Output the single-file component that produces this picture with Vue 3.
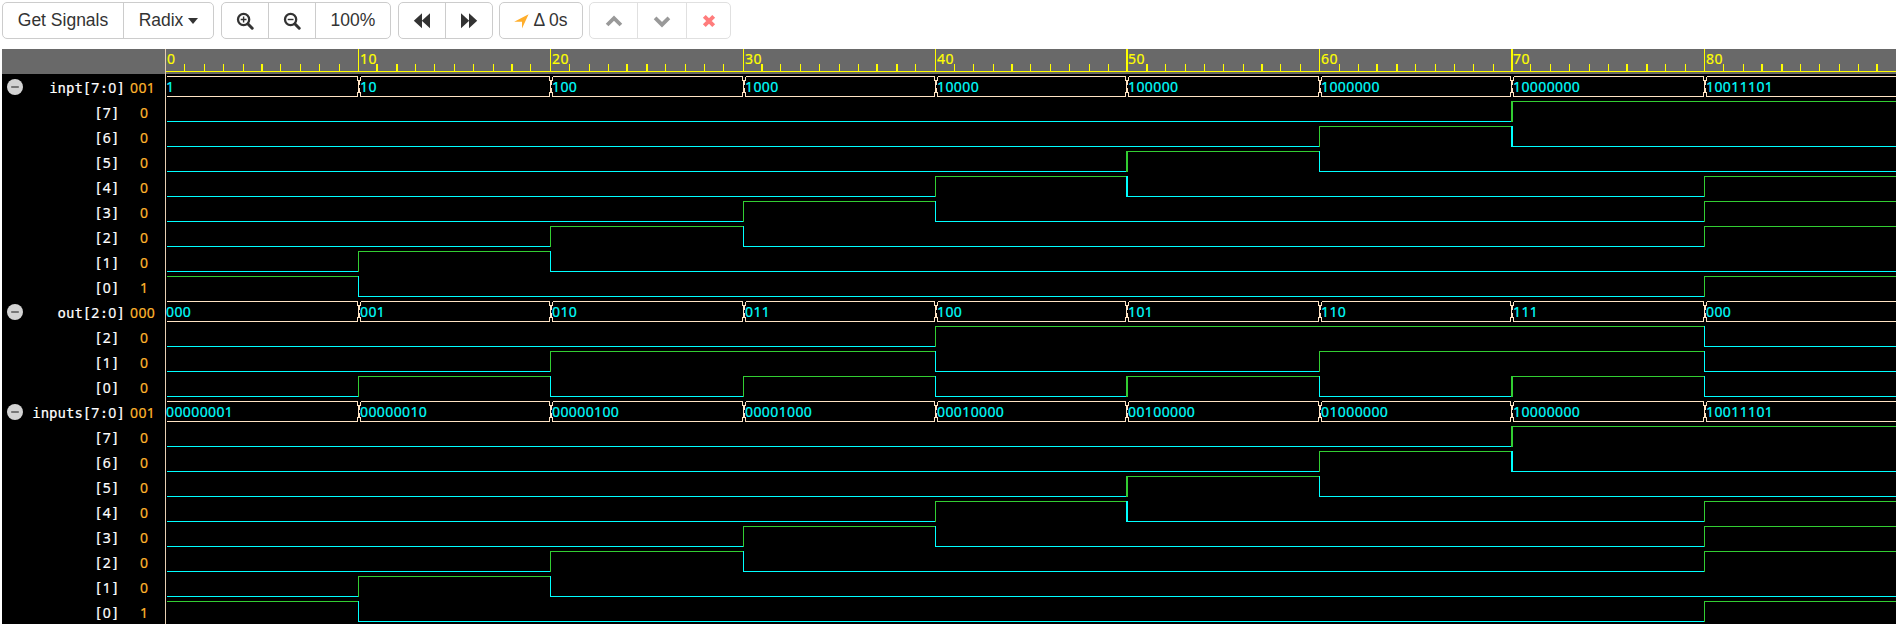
<script setup>
const times = [0, 10, 20, 30, 40, 50, 60, 70, 80]
const END = 1896

// Grid position snapped to device pixels; every fourth column is two pixels wide
function tick(n) {
  const unit = Math.floor(129.58 + 15.386 * n)
  const q = Math.floor(unit / 4)
  const r = unit % 4
  return { x: q * 5 + 4 + [0, 1, 2, 4][r], w: r === 2 ? 2 : 1 }
}

const ticks = []
for (let n = 1; n < 90; n++) {
  const t = tick(n)
  if (t.x < END) ticks.push({ n, ...t, major: n % 10 === 0 })
}

const oneHot = ['00000001', '00000010', '00000100', '00001000', '00010000', '00100000', '01000000', '10000000', '10011101']
const codes = ['000', '001', '010', '011', '100', '101', '110', '111', '000']

function bus(name, range, words, shown, value) {
  const size = words[0].length
  const list = [{ group: true, name, range, value, words: shown }]
  for (let b = size - 1; b >= 0; b--) {
    const bits = words.map((w) => Number(w[size - 1 - b]))
    list.push({ group: false, range: String(b), value: String(bits[0]), bits })
  }
  return list
}

const rows = [
  ...bus('inpt', '7:0', oneHot, oneHot.map((w) => w.replace(/^0+/, '')), '001'),
  ...bus('out', '2:0', codes, codes, '000'),
  ...bus('inputs', '7:0', oneHot, oneHot, '001'),
]

const edge = (i) => (i === 0 ? { x: 167, w: 0 } : tick(times[i]))

const rects = []
const frames = []
const labels = []
rows.forEach((row, k) => {
  const hi = 76 + 25 * k
  const lo = hi + 20
  times.forEach((_, i) => {
    const a = edge(i)
    const last = i === times.length - 1
    const b = last ? { x: END, w: 0 } : edge(i + 1)
    if (row.group) {
      const x1 = i === 0 ? 167 : a.x + 2.5
      const x2 = last ? END : b.x - 0.5
      let d = `M${x1} ${hi + 0.5}H${x2}`
      if (!last) d += `V${hi + 4}L${b.x + 0.5} ${hi + 5}V${hi + 16}L${x2} ${hi + 17}V${lo + 0.5}`
      else d += `M${x2} ${lo + 0.5}`
      d += `H${x1}`
      if (i > 0) d += `V${hi + 17}L${a.x + 1.5} ${hi + 16}V${hi + 13}L${a.x + 0.5} ${hi + 12}V${hi + 9}L${a.x + 1.5} ${hi + 8}V${hi + 5}L${x1} ${hi + 4}V${hi + 0.5}`
      frames.push(d)
      labels.push({ x: i === 0 ? 166 : a.x + 2, y: hi + 16, text: row.words[i] })
    } else {
      const on = row.bits[i]
      const color = on ? '#32cd32' : '#00ffff'
      rects.push({ x: a.x, y: on ? hi : lo, w: b.x + b.w - a.x, h: 1, color })
      if (i > 0 && row.bits[i - 1] !== on) {
        rects.push({ x: a.x, y: hi, w: a.w, h: 21, color })
      }
    }
  })
})
</script>

<template>
  <div class="viewer">
    <div class="toolbar">
      <div class="group">
        <button class="w121">Get Signals</button>
        <button class="w90">Radix<span class="caret"></span></button>
      </div>
      <div class="group">
        <button class="w47">
          <svg width="18" height="18" viewBox="0 0 18 18"><circle cx="7.6" cy="7.5" r="5.6" class="ring" /><path d="M12 12l4.2 4.2" class="handle" /><path d="M7.6 4.6v5.8M4.7 7.5h5.8" class="sign" /></svg>
        </button>
        <button class="w47">
          <svg width="18" height="18" viewBox="0 0 18 18"><circle cx="7.6" cy="7.5" r="5.6" class="ring" /><path d="M12 12l4.2 4.2" class="handle" /><path d="M4.7 7.5h5.8" class="sign" /></svg>
        </button>
        <button class="w75">100%</button>
      </div>
      <div class="group">
        <button class="w47">
          <svg width="18" height="18" viewBox="0 0 18 18"><path d="M9 1.3V16.3L.8 8.8zM17 1.3V16.3L8.8 8.8z" fill="#333" /></svg>
        </button>
        <button class="w47">
          <svg width="18" height="18" viewBox="0 0 18 18"><path d="M9 1.3V16.3L17.2 8.8zM1 1.3V16.3L9.2 8.8z" fill="#333" /></svg>
        </button>
      </div>
      <div class="group">
        <button class="w82">
          <svg class="nav" width="15" height="15" viewBox="0 0 15 15"><path d="M14.6.3L8 14.5V7.8H.2z" fill="#ffae2b" /></svg><span class="delta">Δ 0s</span>
        </button>
      </div>
      <div class="group disabled">
        <button class="w47">
          <svg width="18" height="18" viewBox="0 0 18 18"><path d="M2.1 13L9 6.1 15.9 13" class="chev" /></svg>
        </button>
        <button class="w48">
          <svg width="18" height="18" viewBox="0 0 18 18"><path d="M2.1 5.8L9 12.7 15.9 5.8" class="chev" /></svg>
        </button>
        <button class="w44">
          <svg width="18" height="18" viewBox="0 0 18 18"><path d="M4.3 4.3L13.7 13.7M13.7 4.3L4.3 13.7" class="cross" /></svg>
        </button>
      </div>
    </div>

    <div class="panel">
      <div class="names">
        <div class="head"></div>
        <div v-for="(row, k) in rows" :key="k" class="row" :class="{ bit: !row.group }">
          <span class="toggle"><svg v-if="row.group" width="16" height="16" viewBox="0 0 16 16"><circle cx="8" cy="8" r="8" fill="#d3d3d3" /><path d="M4.2 8h7.6" stroke="#505050" stroke-width="1.4" /></svg></span>
          <span class="name">{{ row.name }}[<template v-for="(c, i) in row.range" :key="i"><template v-if="c === ':'">:</template><span v-else class="num">{{ c }}</span></template>]</span>
          <span class="value num">{{ row.value }}</span>
        </div>
      </div>
      <svg class="waves" width="1731" height="575" viewBox="165 49 1731 575">
        <rect x="165" y="49" width="1731" height="575" fill="#000" />
        <rect x="165" y="49" width="1731" height="25" fill="#696969" />
        <rect x="166" y="71" width="1730" height="1" fill="#ff0" />
        <rect v-for="t in ticks" :key="t.n" :x="t.x" :y="t.major ? 49 : 64" :width="t.w" :height="t.major ? 22 : 7" fill="#ff0" />
        <rect x="165" y="49" width="1" height="575" fill="#e6cfb2" />
        <text v-for="(t, i) in times" :key="'t' + t" class="num yellow" :x="i === 0 ? 167 : edge(i).x + 2" y="64">{{ t }}</text>
        <rect v-for="(r, i) in rects" :key="'r' + i" :x="r.x" :y="r.y" :width="r.w" :height="r.h" :fill="r.color" />
        <path v-for="(d, i) in frames" :key="'f' + i" :d="d" class="frame" />
        <text v-for="(l, i) in labels" :key="'l' + i" class="num cyan" :x="l.x" :y="l.y">{{ l.text }}</text>
      </svg>
    </div>
  </div>
</template>

<style scoped>
.viewer {
  width: 1902px;
  height: 627px;
  background: #fff;
  overflow: hidden;
}
.toolbar {
  display: flex;
  gap: 7px;
  height: 47px;
  padding: 2px 0 0 2px;
  align-items: flex-start;
}
.group {
  display: flex;
  height: 37px;
  box-sizing: border-box;
  border: 1px solid #ccc;
  border-radius: 5px;
}
.group:nth-child(4) {
  margin-left: -1px;
}
.group:nth-child(5) {
  margin-left: -1px;
}
button {
  display: flex;
  align-items: center;
  justify-content: center;
  box-sizing: border-box;
  height: 35px;
  padding: 0;
  border: 0;
  background: none;
  color: #333;
  font: 17.5px/25px "Liberation Sans", Arial, sans-serif;
  white-space: pre;
}
button + button {
  border-left: 1px solid #ccc;
}
.w121 { width: 120px; }
.w90 { width: 90px; }
.w47 { width: 47px; }
.w48 { width: 49px; }
.w44 { width: 44px; }
.w75 { width: 75px; }
.w82 { width: 82px; }
.w47:first-child { width: 46px; }
.disabled { border-color: #e0e0e0; }
.disabled .w47 { width: 47px; }
.disabled button { border-color: #e0e0e0; }
.caret {
  margin-left: 5px;
  border-top: 6px solid #333;
  border-left: 5px solid transparent;
  border-right: 5px solid transparent;
}
.nav { margin-top: 2px; }
.delta { margin-left: 4px; }
.ring { fill: none; stroke: #333; stroke-width: 2.3; }
.handle { fill: none; stroke: #333; stroke-width: 3; stroke-linecap: round; }
.sign { fill: none; stroke: #333; stroke-width: 1.4; }
.chev { fill: none; stroke: #999; stroke-width: 3.8; }
.cross { fill: none; stroke: #ff7c7c; stroke-width: 4; }
.panel {
  display: flex;
  padding-left: 2px;
  height: 575px;
}
.names {
  flex: none;
  width: 163px;
  background: #000;
}
.head {
  height: 25px;
  background: #696969;
}
.row {
  display: flex;
  height: 25px;
  line-height: 25px;
  color: #fff;
  -webkit-text-stroke: 0.2px currentColor;
}
.row > span { flex: none; }
.toggle {
  width: 25px;
  padding: 5px 0 0 5px;
  box-sizing: border-box;
  line-height: 0;
}
.name {
  width: 98px;
  text-align: right;
  font: 14px/28px "DejaVu Sans Mono", monospace;
}
.value {
  width: 26px;
  margin-left: 5px;
  line-height: 28px;
  color: #ffb52e;
}
.bit .name { width: 92.5px; }
.bit .value { margin-left: 20.5px; width: 10px; }
.num {
  font-family: "Noto Sans", sans-serif;
  font-size: 14px;
  letter-spacing: 0.4px;
}
.name .num { line-height: 1; }
.waves {
  display: block;
  flex: none;
  shape-rendering: crispEdges;
}
.yellow {
  fill: #ff0;
  stroke: #ff0;
  stroke-width: 0.2px;
}
.cyan {
  fill: #0ff;
  stroke: #0ff;
  stroke-width: 0.2px;
}
.frame {
  fill: none;
  stroke: #ffe4c4;
  stroke-width: 1;
}
</style>
